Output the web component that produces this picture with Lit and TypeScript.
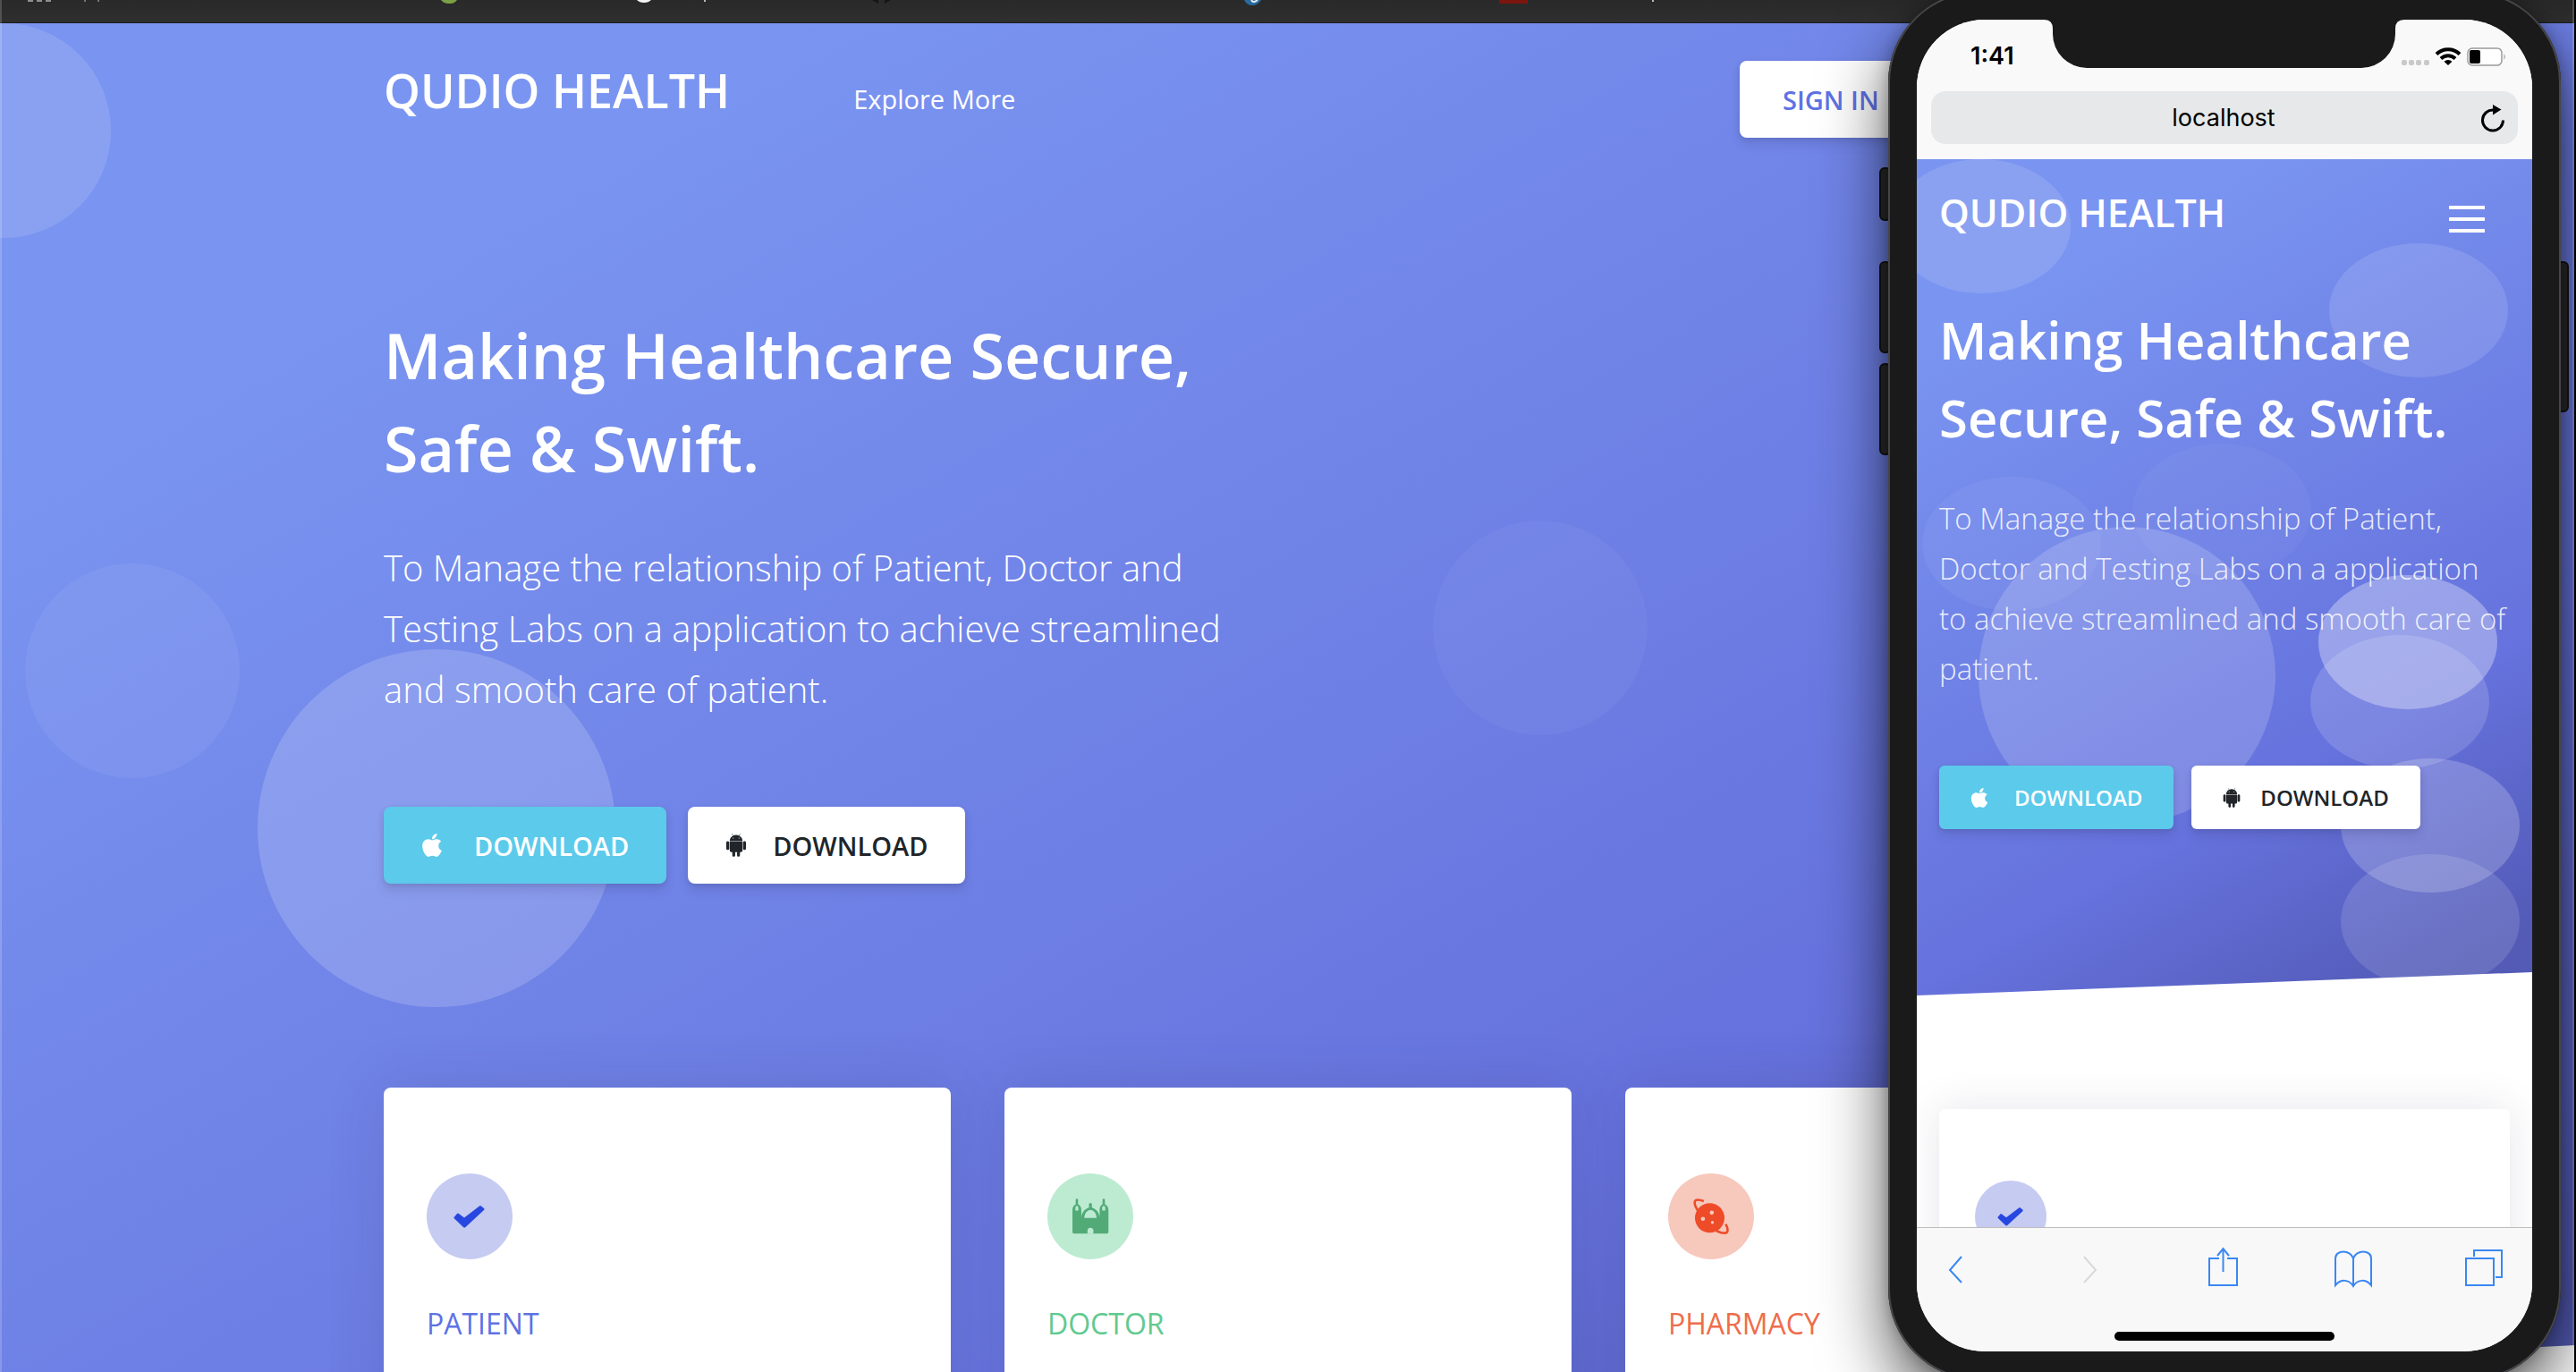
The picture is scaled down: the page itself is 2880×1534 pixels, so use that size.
import { LitElement, html, css, svg } from "lit";
import { customElement } from "lit/decorators.js";

/* ---------- shared icons ---------- */

const appleIcon = html`<svg class="apple" viewBox="0 30 384 452" aria-hidden="true">
  <path
    fill="currentColor"
    d="M318.7 268.7c-.2-36.7 16.4-64.4 50-84.8-18.8-26.9-47.2-41.7-84.7-44.6-35.5-2.8-74.3 20.7-88.5 20.7-15 0-49.4-19.7-76.4-19.7C63.3 141.2 4 184.8 4 273.5q0 39.3 14.4 81.2c12.8 36.7 59 126.7 107.2 125.2 25.2-.6 43-17.9 75.8-17.9 31.8 0 48.3 17.9 76.4 17.9 48.6-.7 90.4-82.5 102.6-119.3-65.2-30.7-61.7-90-61.7-91.9zm-56.6-164.2c27.3-32.4 24.8-61.9 24-72.5-24.1 1.4-52 16.4-67.9 34.9-17.5 19.8-27.8 44.3-25.6 71.9 26.1 2 49.9-11.4 69.5-34.3z"
  />
</svg>`;

const androidIcon = html`<svg class="android" viewBox="32 30 384 452" aria-hidden="true">
  <path
    fill="currentColor"
    d="M89.6 204.5v115.8c0 15.4-12.1 27.7-27.5 27.7-15.3 0-30.1-12.4-30.1-27.7V204.5c0-15.1 14.8-27.5 30.1-27.5 15.1 0 27.5 12.4 27.5 27.5zm10.8 157c0 16.4 13.2 29.6 29.6 29.6h19.9l.3 61.1c0 36.9 55.2 36.6 55.2 0v-61.1h37.2v61.1c0 36.7 55.5 36.8 55.5 0v-61.1h20.2c16.2 0 29.4-13.2 29.4-29.6V182.1H100.4v179.4zm248-189.1H99.3c0-42.8 25.6-80 63.6-99.4l-19.1-35.3c-2.8-4.9 4.3-8 6.7-3.8l19.4 35.6c34.9-15.5 75-14.7 108.3 0L297.5 34c2.5-4.3 9.5-1.1 6.7 3.8L285.1 73c37.7 19.4 63.3 56.6 63.3 99.4zm-170.7-55.5c0-5.7-4.6-10.5-10.5-10.5-5.7 0-10.2 4.8-10.2 10.5s4.6 10.5 10.2 10.5c5.9 0 10.5-4.8 10.5-10.5zm113.4 0c0-5.7-4.6-10.5-10.2-10.5-5.9 0-10.5 4.8-10.5 10.5s4.6 10.5 10.5 10.5c5.6 0 10.2-4.8 10.2-10.5zm94.8 60.1c-15.1 0-27.5 12.1-27.5 27.5v115.8c0 15.4 12.4 27.7 27.5 27.7 15.4 0 30.1-12.4 30.1-27.7V204.5c0-15.4-14.8-27.5-30.1-27.5z"
  />
</svg>`;

const checkGlyph = svg`<path
  fill="#2747e0"
  d="M34 53.500 L37 50 Q38 49 39 50 L45 54.500 L62 41.500 Q63 40.500 64 41.500 L67 44 Q68 45 67 46 L46.500 65 Q45 66 44 65 L34 55.500 Q33 54.500 34 53.500 Z"
/>`;

const castleGlyph = svg`<g transform="translate(28 28) scale(.33)">
  <g fill="#52ab77">
    <path d="M0 38 Q1 25 11 20 V5 a4 4 0 0 1 8 0 V20 Q30 26 30 38 V62 H92 V38 Q92 26 102 20 V5 a4 4 0 0 1 8 0 V20 Q121 25 122 38 V114 a5 5 0 0 1 -5 5 H5 a5 5 0 0 1 -5 -5 Z" />
    <rect x="56" y="15" width="10" height="22" rx="5" />
    <path d="M30 64 A31 34 0 0 1 92 64 Z" />
  </g>
  <g fill="#bdebd2">
    <path d="M31 30 V56 Q36 38 54 31 V28 Z" />
    <path d="M91 30 V56 Q86 38 68 31 V28 Z" />
    <path d="M40 66 A21 27 0 0 1 82 66 Z" />
    <path d="M10 41 V32 a5 7 0 0 1 10 0 V41 Z" />
    <path d="M101 41 V32 a5 7 0 0 1 10 0 V41 Z" />
    <path d="M51 120 V110 a10 11 0 0 1 20 0 V120 Z" />
  </g>
</g>`;

const planetGlyph = svg`<g transform="translate(28 28) scale(.33)">
  <circle cx="56" cy="66" r="50" fill="#ee4b29" />
  <g fill="none" stroke="#ee4b29" stroke-width="8">
    <path d="M36 9 Q10 0 6 9 Q1 18 16 42" />
    <path d="M78 110 Q108 122 114 115 Q121 106 110 87" />
  </g>
  <g fill="#f7c8bc">
    <circle cx="63" cy="48" r="7" />
    <circle cx="33" cy="69" r="7" />
    <circle cx="65" cy="81" r="5" />
  </g>
</g>`;

const checkBadge = html`<svg class="badge" viewBox="0 0 96 96" aria-hidden="true">
  <circle cx="48" cy="48" r="48" fill="#c5cbf1" />
  <g transform="translate(-3 -5)">${checkGlyph}</g>
</svg>`;
const castleBadge = html`<svg class="badge" viewBox="0 0 96 96" aria-hidden="true">
  <circle cx="48" cy="48" r="48" fill="#bdebd2" />
  ${castleGlyph}
</svg>`;
const planetBadge = html`<svg class="badge" viewBox="0 0 96 96" aria-hidden="true">
  <circle cx="48" cy="48" r="48" fill="#f7c8bc" />
  ${planetGlyph}
</svg>`;

const shared = css`
  * {
    box-sizing: border-box;
    margin: 0;
  }
  button,
  input {
    font: inherit;
    border: 0;
    background: none;
    padding: 0;
    color: inherit;
  }
  a {
    color: inherit;
    text-decoration: none;
  }
  svg {
    display: block;
    flex: none;
  }
  .bubble {
    position: absolute;
    border-radius: 50%;
    background: rgba(255, 255, 255, 0.12);
  }
  .btn {
    display: flex;
    align-items: center;
    font-weight: 600;
    border-radius: 8px;
    box-shadow: 0 8px 12px rgba(50, 50, 93, 0.12), 0 2px 6px rgba(0, 0, 0, 0.1);
    white-space: nowrap;
  }
  .info {
    background: #5ccaeb;
    color: #fff;
  }
  .white {
    background: #fff;
    color: #212529;
  }
`;

/* ---------- desktop landing page ---------- */

@customElement("landing-page")
export class LandingPage extends LitElement {
  static styles = [
    shared,
    css`
      :host {
        display: block;
        background: #fff;
        color: #fff;
      }
      .hero {
        position: relative;
        min-height: 1618px;
        overflow: hidden;
        background: linear-gradient(150deg, #7a95f1 15%, #6672dd 70%, #535bb7 94%);
        clip-path: polygon(0 0, 100% 0, 100% calc(100% - 140px), 0 100%);
      }
      .b1 { left: -116px; top: 0; width: 240px; height: 240px; }
      .b2 { left: 28px; top: 604px; width: 240px; height: 240px; background: rgba(255, 255, 255, 0.06); }
      .b3 { left: 288px; top: 700px; width: 400px; height: 400px; background: rgba(255, 255, 255, 0.17); }
      .b4 { left: 1602px; top: 556px; width: 240px; height: 240px; background: rgba(255, 255, 255, 0.04); }
      .container {
        position: relative;
        max-width: 2022px;
        margin: 0 auto;
      }
      .nav {
        display: flex;
        align-items: center;
        padding-top: 42px;
      }
      .brand {
        font-size: 52px;
        line-height: 66px;
        font-weight: 600;
        padding-bottom: 20px;
        margin-right: 138px;
      }
      .link {
        font-size: 29px;
        line-height: 40px;
      }
      .signin {
        margin-left: auto;
        width: 506px;
        height: 86px;
        padding: 0 48px;
        font-size: 29px;
        color: #5e72e4;
      }
      h1 {
        margin-top: 191px;
        max-width: 1000px;
        font-size: 70px;
        line-height: 104px;
        font-weight: 600;
      }
      .lead {
        margin-top: 48px;
        max-width: 960px;
        font-size: 40px;
        line-height: 68px;
        font-weight: 300;
      }
      .actions {
        display: flex;
        gap: 24px;
        margin-top: 97px;
      }
      .actions .btn {
        height: 86px;
        padding: 0 42px;
        font-size: 29px;
      }
      .actions svg {
        height: 26px;
        width: 24px;
      }
      .apple { margin-right: 35px; }
      .android { margin-right: 29px; }
      .cards {
        display: grid;
        grid-template-columns: repeat(3, 1fr);
        gap: 60px;
        margin-top: 228px;
      }
      .card {
        min-height: 420px;
        padding: 96px 48px;
        background: #fff;
        border-radius: 8px;
        box-shadow: 0 0 64px rgba(50, 50, 93, 0.16);
      }
      .badge {
        width: 96px;
        height: 96px;
      }
      h2 {
        margin-top: 48px;
        font-size: 32px;
        line-height: 48px;
        font-weight: 400;
      }
      .patient { color: #5e72e4; }
      .doctor { color: #60ca90; }
      .pharmacy { color: #ef6d4c; }
    `,
  ];

  render() {
    return html`<section class="hero">
      <span class="bubble b1"></span>
      <span class="bubble b2"></span>
      <span class="bubble b3"></span>
      <span class="bubble b4"></span>
      <div class="container">
        <nav class="nav">
          <a class="brand" href="#">QUDIO HEALTH</a>
          <a class="link" href="#">Explore More</a>
          <button class="btn white signin">SIGN IN</button>
        </nav>
        <h1>Making Healthcare Secure, Safe &amp; Swift.</h1>
        <p class="lead">
          To Manage the relationship of Patient, Doctor and Testing Labs on a
          application to achieve streamlined and smooth care of patient.
        </p>
        <div class="actions">
          <button class="btn info">${appleIcon}DOWNLOAD</button>
          <button class="btn white">${androidIcon}DOWNLOAD</button>
        </div>
        <div class="cards">
          <article class="card">${checkBadge}<h2 class="patient">PATIENT</h2></article>
          <article class="card">${castleBadge}<h2 class="doctor">DOCTOR</h2></article>
          <article class="card">${planetBadge}<h2 class="pharmacy">PHARMACY</h2></article>
        </div>
      </div>
    </section>`;
  }
}

/* ---------- phone simulator ---------- */

@customElement("phone-simulator")
export class PhoneSimulator extends LitElement {
  static styles = [
    shared,
    css`
      :host {
        display: block;
        color: #fff;
      }
      .device {
        position: relative;
        height: 100%;
      }
      .key {
        position: absolute;
        width: 14px;
        background: #2a2a2a;
        border: 2px solid #141414;
        border-radius: 6px;
      }
      .k1 { left: -10px; top: 197px; height: 60px; }
      .k2 { left: -10px; top: 302px; height: 103px; }
      .k3 { left: -10px; top: 416px; height: 103px; }
      .k4 { right: -9px; top: 302px; height: 169px; }
      .body {
        position: relative;
        height: 100%;
        padding: 32px;
        background: #1a1a1a;
        border-radius: 102px;
        box-shadow: inset 0 0 0 2px #46464a, 0 34px 76px rgba(0, 0, 0, 0.66),
          0 0 16px rgba(0, 0, 0, 0.25);
      }
      .screen {
        position: relative;
        display: flex;
        flex-direction: column;
        height: 100%;
        overflow: hidden;
        border-radius: 76px;
        background: #fff;
      }
      .notch {
        position: absolute;
        top: 0;
        left: 142px;
        width: 404px;
        height: 54px;
      }
      .chrome {
        background: #f9f9f9;
        color: #000;
        font-family: Inter, "Liberation Sans", sans-serif;
        padding: 0 16px 17px;
      }
      .status {
        display: flex;
        justify-content: space-between;
        align-items: center;
        height: 80px;
        padding: 2px 12px 0 44px;
      }
      .time {
        font-size: 27px;
        line-height: 32px;
        font-weight: 600;
      }
      .address {
        position: relative;
        display: flex;
        align-items: center;
        height: 59px;
        padding: 0 13px;
        border-radius: 16px;
        background: #e6e8e9;
      }
      .url {
        flex: 1;
        min-width: 0;
        padding-left: 28px;
        text-align: center;
        font-size: 27px;
        line-height: 36px;
      }
      .view {
        position: relative;
        flex: 1;
        min-height: 0;
        overflow: hidden;
      }
      .hero {
        position: relative;
        height: 935px;
        padding: 27px 25px 0;
        background: linear-gradient(150deg, #7a95f1 15%, #6672dd 70%, #535bb7 94%);
        clip-path: polygon(0 0, 100% 0, 100% calc(100% - 26px), 0 100%);
      }
      .bubble { width: 200px; height: 150px; }
      .p1 { left: -28px; top: 0; }
      .p2 { left: 461px; top: 94px; }
      .p3 { left: 241px; top: 318px; background: rgba(255, 255, 255, 0.04); }
      .p4 { left: 6px; top: 355px; background: rgba(255, 255, 255, 0.05); }
      .p5 { left: 69px; top: 411px; width: 332px; height: 332px; background: rgba(255, 255, 255, 0.17); }
      .p6 { left: 449px; top: 465px; background: rgba(255, 255, 255, 0.32); }
      .p7 { left: 440px; top: 532px; background: rgba(255, 255, 255, 0.15); }
      .p8 { left: 474px; top: 670px; background: rgba(255, 255, 255, 0.2); }
      .p9 { left: 474px; top: 777px; background: rgba(255, 255, 255, 0.13); }
      .content {
        position: relative;
      }
      .nav {
        display: flex;
        align-items: center;
        justify-content: space-between;
        padding-right: 28px;
      }
      .brand {
        font-size: 43px;
        line-height: 66px;
        font-weight: 600;
      }
      .menu {
        padding-top: 14px;
      }
      h1 {
        margin-top: 65px;
        font-size: 58px;
        line-height: 87px;
        font-weight: 600;
      }
      .lead {
        margin-top: 42px;
        font-size: 33px;
        line-height: 56px;
        font-weight: 300;
        opacity: 0.85;
      }
      .actions {
        display: flex;
        gap: 20px;
        margin-top: 80px;
      }
      .btn {
        height: 71px;
        padding: 0 35px;
        font-size: 24px;
        border-radius: 6px;
      }
      .btn svg {
        width: 20px;
        height: 22px;
      }
      .apple { margin-right: 29px; }
      .android { margin-right: 22px; }
      .card {
        height: 400px;
        margin: 127px 25px 0;
        padding: 80px 40px;
        background: #fff;
        border-radius: 6px;
        box-shadow: 0 0 48px rgba(50, 50, 93, 0.12);
      }
      .badge {
        width: 80px;
        height: 80px;
      }
      .toolbar {
        height: 139px;
        border-top: 1px solid #bdbdbf;
        background: #f8f8f9;
      }
      .tools {
        display: flex;
        justify-content: space-between;
        padding: 20px 33px 0 35px;
      }
      .home {
        width: 246px;
        height: 10px;
        margin: 48px auto 0;
        border-radius: 5px;
        background: #000;
      }
      .tool {
        color: #3a87f2;
      }
      .off {
        color: #d9d9db;
      }
    `,
  ];

  render() {
    const tool = (label: string, width: number, off: boolean, d: string) => html`<button
      class="tool ${off ? "off" : ""}"
      aria-label=${label}
    >
      <svg width=${width} height="48" viewBox="0 0 ${width} 48">
        <path fill="none" stroke="currentColor" stroke-width="2" d=${d} />
      </svg>
    </button>`;

    return html`<div class="device">
      <span class="key k1"></span><span class="key k2"></span>
      <span class="key k3"></span><span class="key k4"></span>
      <div class="body">
        <div class="screen">
          <header class="chrome">
            <div class="status">
              <span class="time">1:41</span>
              <svg width="120" height="24" viewBox="0 0 120 24" aria-hidden="true">
                <g fill="#c9c9c9">
                  <rect x="2" y="16" width="6" height="6" rx="2" />
                  <rect x="10" y="16" width="6" height="6" rx="2" />
                  <rect x="18" y="16" width="6" height="6" rx="2" />
                  <rect x="27" y="16" width="6" height="6" rx="2" />
                </g>
                <g fill="none" stroke="#000" stroke-width="4">
                  <path d="M41 9.500 A18.500 18.500 0 0 1 67 9.500" />
                  <path d="M46 14.500 A11.500 11.500 0 0 1 62 14.500" />
                </g>
                <path d="M54 22 L49.500 17.800 A6.500 6.500 0 0 1 58.500 17.800 Z" />
                <rect x="76" y="3" width="38" height="19" rx="5" fill="#fff" stroke="#9b9b9b" stroke-width="1.500" />
                <rect x="78" y="5" width="12" height="15" rx="2" />
                <path d="M116.500 9 Q119 12.500 116.500 16 Z" fill="#9b9b9b" />
              </svg>
            </div>
            <div class="address">
              <input class="url" aria-label="Address" value="localhost" size="9" />
              <button aria-label="Reload">
                <svg width="30" height="32" viewBox="0 0 30 32">
                  <path d="M26.500 18.500 A11.500 11.500 0 1 1 16 7" fill="none" stroke="#000" stroke-width="3" />
                  <path d="M15 1 L24.500 6.500 L15 12.500 Z" />
                </svg>
              </button>
            </div>
          </header>
          <main class="view">
            <section class="hero">
              ${[1, 2, 3, 4, 5, 6, 7, 8, 9].map((n) => html`<span class="bubble p${n}"></span>`)}
              <div class="content">
                <nav class="nav">
                  <a class="brand" href="#">QUDIO HEALTH</a>
                  <button class="menu" aria-label="Menu">
                    <svg width="40" height="32" viewBox="0 0 40 32">
                      <path d="M1 3 H39 M1 16 H39 M1 29 H39" stroke="#fff" stroke-width="4" stroke-linecap="round" />
                    </svg>
                  </button>
                </nav>
                <h1>Making Healthcare Secure, Safe &amp; Swift.</h1>
                <p class="lead">
                  To Manage the relationship of Patient, Doctor and Testing Labs
                  on a application to achieve streamlined and smooth care of
                  patient.
                </p>
                <div class="actions">
                  <button class="btn info">${appleIcon}DOWNLOAD</button>
                  <button class="btn white">${androidIcon}DOWNLOAD</button>
                </div>
              </div>
            </section>
            <article class="card">${checkBadge}</article>
          </main>
          <footer class="toolbar">
            <div class="tools">
              ${tool("Back", 48, false, "M15 12 L2 27 L15 41")}
              ${tool("Forward", 30, true, "M1 12 L14 27 L1 41")}
              ${tool("Share", 44, false, "M19 14 H8 V44 H39 V14 H28 M23.500 29 V3 M17 11 L23.500 3 L30 11")}
              ${tool("Bookmarks", 44, false, "M22 14 C19 4 2 4 2 14 V44 C8 37 17 37 22 45 C27 37 36 37 42 44 V14 C42 4 25 4 22 14 V45")}
              ${tool("Tabs", 42, false, "M1 14 H32 V44 H1 Z M10 12 V5 H41 V35 H34")}
            </div>
            <div class="home"></div>
          </footer>
          <svg class="notch" viewBox="0 0 404 54" aria-hidden="true">
            <path d="M0 0 Q10 0 10 10 V16 A38 38 0 0 0 48 54 H355 A38 38 0 0 0 393 16 V10 Q393 0 403 0 Z" fill="#1a1a1a" />
          </svg>
        </div>
      </div>
    </div>`;
  }
}

/* ---------- desktop ---------- */

@customElement("app-root")
export class AppRoot extends LitElement {
  static styles = css`
    :host {
      display: block;
      position: relative;
      height: 100vh;
      overflow: hidden;
      font-family: "Open Sans", "Noto Sans", sans-serif;
      background: #fff;
    }
    .tabs {
      height: 26px;
      overflow: hidden;
      background: linear-gradient(#292929, #2f2f2f);
      border-bottom: 1px solid #1c1c1c;
      box-sizing: border-box;
    }
    .tabs svg {
      display: block;
    }
    .edge {
      position: absolute;
      top: 0;
      bottom: 0;
      width: 2px;
      background: rgba(255, 255, 255, 0.18);
    }
    .left {
      left: 0;
    }
    .right {
      right: 2px;
    }
    .outer {
      right: 0;
      background: #000;
    }
    .phone {
      position: absolute;
      top: -10px;
      right: 17px;
      width: 752px;
      height: 1553px;
    }
  `;

  render() {
    return html`
      <div class="tabs">
        <svg width="1900" height="8" viewBox="0 0 1900 8" aria-hidden="true">
          <path d="M31 0 h6 v2 h-6z M41 0 h6 v2 h-6z M51 0 h6 v2 h-6z" fill="#8f8f8f" />
          <path d="M94 0 h2 v2 h-2z M109 0 h2 v2 h-2z" fill="#777" />
          <path d="M493 0 H511 Q508 4 502 4 Q496 4 493 0 Z" fill="#7ba045" />
          <path d="M712 0 H728 Q725 3 720 3 Q715 3 712 0 Z" fill="#f4f4f4" />
          <path d="M787 0 h2 v2 h-2z M1847 0 h2 v2 h-2z" fill="#bbb" />
          <path d="M975 0 H982 V4 Z M996 0 H989 V4 Z" fill="#151515" />
          <path d="M1391 0 H1410 Q1406 6 1400 6 Q1394 6 1391 0 Z" fill="#2a6aa0" />
          <path d="M1399 0 Q1401 4 1406 0" fill="none" stroke="#e6eef5" stroke-width="2" />
          <rect x="1676" y="0" width="32" height="4" fill="#7c150e" />
        </svg>
      </div>
      <landing-page></landing-page>
      <span class="edge left"></span>
      <span class="edge right"></span>
      <span class="edge outer"></span>
      <phone-simulator class="phone"></phone-simulator>
    `;
  }
}
